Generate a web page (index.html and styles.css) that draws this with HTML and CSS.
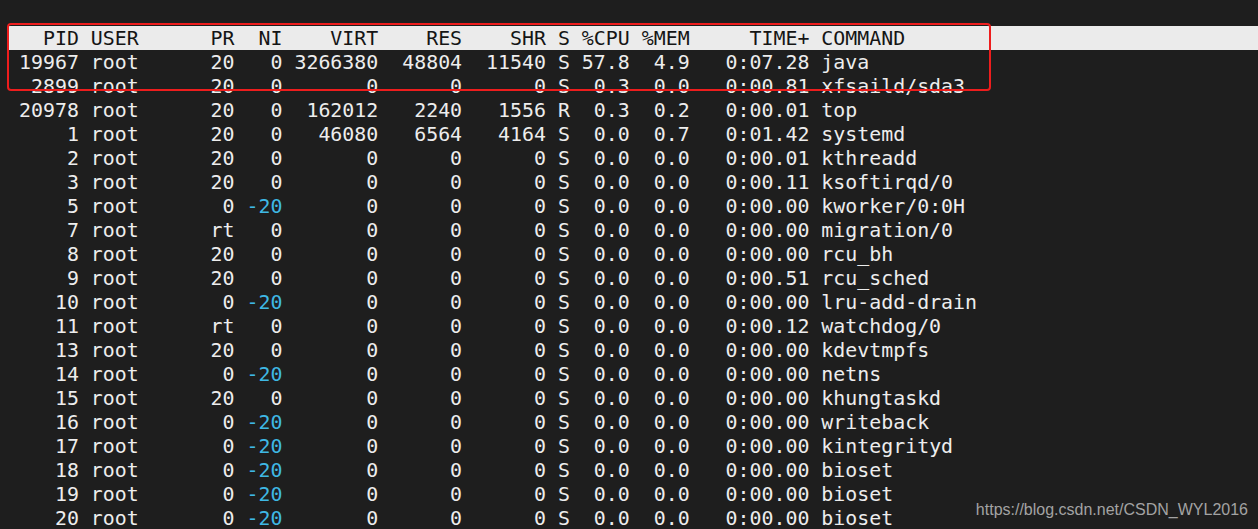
FILE: index.html
```html
<!DOCTYPE html>
<html lang="en">
<head>
<meta charset="utf-8">
<title>top</title>
<link rel="stylesheet" href="styles.css">
</head>
<body>
<div class="screen">
  <div class="term">
    <div class="row head">  PID USER      PR  NI    VIRT    RES    SHR S %CPU %MEM     TIME+ COMMAND</div>
    <div class="row">19967 root      20   0 3266380  48804  11540 S 57.8  4.9   0:07.28 java</div>
    <div class="row"> 2899 root      20   0       0      0      0 S  0.3  0.0   0:00.81 xfsaild/sda3</div>
    <div class="row">20978 root      20   0  162012   2240   1556 R  0.3  0.2   0:00.01 top</div>
    <div class="row">    1 root      20   0   46080   6564   4164 S  0.0  0.7   0:01.42 systemd</div>
    <div class="row">    2 root      20   0       0      0      0 S  0.0  0.0   0:00.01 kthreadd</div>
    <div class="row">    3 root      20   0       0      0      0 S  0.0  0.0   0:00.11 ksoftirqd/0</div>
    <div class="row">    5 root       0 <span class="neg">-20</span>       0      0      0 S  0.0  0.0   0:00.00 kworker/0:0H</div>
    <div class="row">    7 root      rt   0       0      0      0 S  0.0  0.0   0:00.00 migration/0</div>
    <div class="row">    8 root      20   0       0      0      0 S  0.0  0.0   0:00.00 rcu_bh</div>
    <div class="row">    9 root      20   0       0      0      0 S  0.0  0.0   0:00.51 rcu_sched</div>
    <div class="row">   10 root       0 <span class="neg">-20</span>       0      0      0 S  0.0  0.0   0:00.00 lru-add-drain</div>
    <div class="row">   11 root      rt   0       0      0      0 S  0.0  0.0   0:00.12 watchdog/0</div>
    <div class="row">   13 root      20   0       0      0      0 S  0.0  0.0   0:00.00 kdevtmpfs</div>
    <div class="row">   14 root       0 <span class="neg">-20</span>       0      0      0 S  0.0  0.0   0:00.00 netns</div>
    <div class="row">   15 root      20   0       0      0      0 S  0.0  0.0   0:00.00 khungtaskd</div>
    <div class="row">   16 root       0 <span class="neg">-20</span>       0      0      0 S  0.0  0.0   0:00.00 writeback</div>
    <div class="row">   17 root       0 <span class="neg">-20</span>       0      0      0 S  0.0  0.0   0:00.00 kintegrityd</div>
    <div class="row">   18 root       0 <span class="neg">-20</span>       0      0      0 S  0.0  0.0   0:00.00 bioset</div>
    <div class="row">   19 root       0 <span class="neg">-20</span>       0      0      0 S  0.0  0.0   0:00.00 bioset</div>
    <div class="row">   20 root       0 <span class="neg">-20</span>       0      0      0 S  0.0  0.0   0:00.00 bioset</div>
  </div>
  <div class="highlight"></div>
  <div class="watermark">https://blog.csdn.net/CSDN_WYL2016</div>
</div>
</body>
</html>
```

FILE: styles.css
```css
html, body {
  margin: 0;
  padding: 0;
  background: #1e1e1e;
}

.screen {
  position: relative;
  width: 1258px;
  height: 529px;
  overflow: hidden;
  background: #1e1e1e;
}

.term {
  padding-top: 26px;
  padding-left: 8px;
  font-family: "DejaVu Sans Mono", monospace;
  font-size: 19.9px;
  line-height: 23px;
  color: #ededed;
}

.row {
  box-sizing: border-box;
  height: 24px;
  padding-top: 1px;
  padding-left: 11px;
  white-space: pre;
}

.row.head {
  background: #ebebeb;
  color: #151515;
}

.neg {
  color: #3fb8e4;
}

.highlight {
  position: absolute;
  left: 7px;
  top: 23px;
  width: 980px;
  height: 64px;
  border: 2px solid #ee1d1d;
  border-radius: 4px;
}

.watermark {
  position: absolute;
  right: 10px;
  top: 501px;
  font-family: "Liberation Sans", Arial, sans-serif;
  font-size: 16px;
  line-height: 18px;
  color: #a3a3a3;
}
```
